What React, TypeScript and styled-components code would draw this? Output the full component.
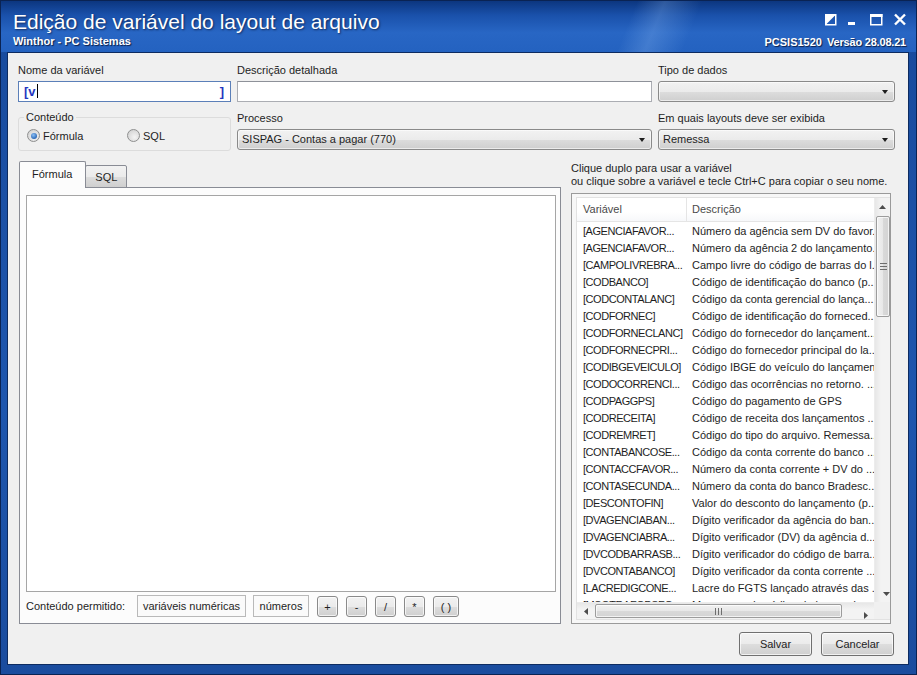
import React from 'react';
import styled, { createGlobalStyle, css } from 'styled-components';

const GlobalStyle = createGlobalStyle`
  html, body {
    margin: 0;
    padding: 0;
  }

  body {
    width: 917px;
    height: 675px;
    overflow: hidden;
    font-family: 'Liberation Sans', Arial, sans-serif;
    font-size: 11px;
    color: #1e1e1e;
  }

  * {
    box-sizing: border-box;
  }
`;

const vars: [string, string][] = [
  ['[AGENCIAFAVOR...', 'Número da agência sem DV do favor...'],
  ['[AGENCIAFAVOR...', 'Número da agência 2 do lançamento...'],
  ['[CAMPOLIVREBRA...', 'Campo livre do código de barras do l...'],
  ['[CODBANCO]', 'Código de identificação do banco (p...'],
  ['[CODCONTALANC]', 'Código da conta gerencial do lança...'],
  ['[CODFORNEC]', 'Código de identificação do forneced...'],
  ['[CODFORNECLANC]', 'Código do fornecedor do lançament...'],
  ['[CODFORNECPRI...', 'Código do fornecedor principal do la...'],
  ['[CODIBGEVEICULO]', 'Código IBGE do veículo do lançamento'],
  ['[CODOCORRENCI...', 'Código das ocorrências no retorno. ...'],
  ['[CODPAGGPS]', 'Código do pagamento de GPS'],
  ['[CODRECEITA]', 'Código de receita dos lançamentos ...'],
  ['[CODREMRET]', 'Código do tipo do arquivo. Remessa...'],
  ['[CONTABANCOSE...', 'Código da conta corrente do banco ...'],
  ['[CONTACCFAVOR...', 'Número da conta corrente + DV do ...'],
  ['[CONTASECUNDA...', 'Número da conta do banco Bradesc...'],
  ['[DESCONTOFIN]', 'Valor do desconto do lançamento (p...'],
  ['[DVAGENCIABAN...', 'Dígito verificador da agência do ban...'],
  ['[DVAGENCIABRA...', 'Dígito verificador (DV) da agência d...'],
  ['[DVCODBARRASB...', 'Dígito verificador do código de barra...'],
  ['[DVCONTABANCO]', 'Dígito verificador da conta corrente ...'],
  ['[LACREDIGCONE...', 'Lacre do FGTS lançado através das ...'],
  ['[MSGTRAFGPSFG...', 'Mensagem do código de barras de ...'],
];

const winButton = css`
  border: 1px solid #707070;
  border-radius: 3px;
  background: linear-gradient(180deg, #f2f2f2 0%, #ebebeb 50%, #dddddd 51%, #cfcfcf 100%);
  box-shadow: inset 0 0 0 1px rgba(255, 255, 255, 0.7);
  font-family: inherit;
  font-size: 11px;
  color: #1e1e1e;
  padding: 0;
`;

function Dialog() {
  return (
    <Window>
      <TitleBar>
        <TitleLeft>
          <Title>Edição de variável do layout de arquivo</Title>
          <SubTitle>Winthor - PC Sistemas</SubTitle>
        </TitleLeft>
        <TitleRight>
          <WindowControls width='84' height='13' viewBox='0 0 84 13'>
            <rect x='1.75' y='1.75' width='10' height='10' fill='none' stroke='#fff' strokeWidth='1.5' />
            <polygon points='1.75,1.75 11.75,1.75 1.75,11.75' fill='#fff' />
            <rect x='24' y='9' width='7' height='3' fill='#fff' />
            <rect x='46.75' y='1.75' width='11' height='10' fill='none' stroke='#fff' strokeWidth='1.5' />
            <rect x='46' y='1' width='12.5' height='3' fill='#fff' />
            <path d='M71 1.5 L81 11.5 M81 1.5 L71 11.5' stroke='#fff' strokeWidth='2.4' />
          </WindowControls>
          <SubTitle>
            PCSIS1520 <Version>Versão 28.08.21</Version>
          </SubTitle>
        </TitleRight>
      </TitleBar>

      <Client>
        <FormGrid>
          <Field>
            <Label>Nome da variável</Label>
            <NameInput>
              <span>
                [v<Caret />
              </span>
              <span>]</span>
            </NameInput>
          </Field>
          <Field>
            <Label>Descrição detalhada</Label>
            <TextInput />
          </Field>
          <Field>
            <Label>Tipo de dados</Label>
            <Combo />
          </Field>

          <GroupBox>
            <legend>Conteúdo</legend>
            <RadioRow>
              <RadioItem $width={100}>
                <Radio $checked />
                Fórmula
              </RadioItem>
              <RadioItem>
                <Radio />
                SQL
              </RadioItem>
            </RadioRow>
          </GroupBox>
          <Field $offset>
            <Label>Processo</Label>
            <Combo>SISPAG - Contas a pagar (770)</Combo>
          </Field>
          <Field $offset>
            <Label>Em quais layouts deve ser exibida</Label>
            <Combo>Remessa</Combo>
          </Field>
        </FormGrid>

        <MainGrid>
          <TabsColumn>
            <TabStrip>
              <Tab $active>Fórmula</Tab>
              <Tab>SQL</Tab>
            </TabStrip>
            <TabPanel>
              <Memo />
              <AllowedRow>
                <AllowedLabel>Conteúdo permitido:</AllowedLabel>
                <AllowedBox $width={109}>variáveis numéricas</AllowedBox>
                <AllowedBox $width={56}>números</AllowedBox>
                <OpButton>+</OpButton>
                <OpButton>-</OpButton>
                <OpButton>/</OpButton>
                <OpButton>*</OpButton>
                <OpButton $wide>( )</OpButton>
              </AllowedRow>
            </TabPanel>
          </TabsColumn>

          <VarsColumn>
            <Hint>
              Clique duplo para usar a variável
              <br />
              ou clique sobre a variável e tecle Ctrl+C para copiar o seu nome.
            </Hint>
            <ListGroup>
              <ListView>
                <ListBody>
                  <HeaderRow>
                    <HeaderCell $first>Variável</HeaderCell>
                    <HeaderCell>Descrição</HeaderCell>
                  </HeaderRow>
                  {vars.map(([name, desc], i) => (
                    <Row key={i}>
                      <NameCell>{name}</NameCell>
                      <DescCell>{desc}</DescCell>
                    </Row>
                  ))}
                </ListBody>
                <VScroll>
                  <ScrollArrow>
                    <svg width='7' height='4' viewBox='0 0 7 4'>
                      <path d='M0 4 L3.5 0 L7 4 Z' fill='#4d4d4d' />
                    </svg>
                  </ScrollArrow>
                  <VThumb>
                    <Grip $vertical />
                  </VThumb>
                  <ScrollArrow $end>
                    <svg width='7' height='4' viewBox='0 0 7 4'>
                      <path d='M0 0 L3.5 4 L7 0 Z' fill='#4d4d4d' />
                    </svg>
                  </ScrollArrow>
                </VScroll>
                <HScroll>
                  <ScrollArrow>
                    <svg width='4' height='7' viewBox='0 0 4 7'>
                      <path d='M4 0 L0 3.5 L4 7 Z' fill='#4d4d4d' />
                    </svg>
                  </ScrollArrow>
                  <HThumb>
                    <Grip />
                  </HThumb>
                  <ScrollArrow $end>
                    <svg width='4' height='7' viewBox='0 0 4 7'>
                      <path d='M0 0 L4 3.5 L0 7 Z' fill='#4d4d4d' />
                    </svg>
                  </ScrollArrow>
                </HScroll>
                <Corner />
              </ListView>
            </ListGroup>
          </VarsColumn>
        </MainGrid>

        <Footer>
          <DialogButton type='button'>Salvar</DialogButton>
          <DialogButton type='button'>Cancelar</DialogButton>
        </Footer>
      </Client>
    </Window>
  );
}

export default function App() {
  return (
    <>
      <GlobalStyle />
      <Dialog />
    </>
  );
}

const Window = styled.div`
  width: 917px;
  height: 675px;
  display: flex;
  flex-direction: column;
  padding: 0 7px 9px 6px;
  border: 1px solid #0a2353;
  background: linear-gradient(180deg, #184a9c 0%, #1e56ae 60%, #1a4c9e 100%);
`;

const TitleBar = styled.div`
  flex: none;
  height: 51px;
  margin: 0 -7px 0 -6px;
  padding: 0 10px 0 12px;
  display: flex;
  justify-content: space-between;
  background:
    linear-gradient(112deg, transparent 68%, rgba(170, 210, 255, 0.22) 71%, transparent 75%),
    linear-gradient(180deg, #0c367f 0%, #1a51ab 28%, #2866c4 62%, #2462c0 100%);
  color: #fff;
`;

const TitleLeft = styled.div`
  padding-top: 10px;
  display: flex;
  flex-direction: column;
`;

const Title = styled.div`
  font-size: 21px;
  line-height: 22px;
  text-shadow: 1px 1px 2px rgba(0, 0, 20, 0.55);
`;

const SubTitle = styled.div`
  margin-top: 2px;
  font-size: 11px;
  font-weight: bold;
  line-height: 13px;
  white-space: nowrap;
  text-shadow: 1px 1px 1px rgba(0, 0, 20, 0.7);
`;

const Version = styled.span`
  margin-left: 2px;
  letter-spacing: -0.2px;
`;

const TitleRight = styled.div`
  padding-top: 12px;
  display: flex;
  flex-direction: column;
  align-items: flex-end;
`;

const WindowControls = styled.svg`
  display: block;
  margin-right: -2px;
  margin-bottom: 8px;
`;

const Client = styled.div`
  flex: 1;
  display: flex;
  flex-direction: column;
  padding: 10px 13px 7px 10px;
  border: 1px solid #0d2b60;
  background: #f0f0f0;
  min-height: 0;
`;

const FormGrid = styled.div`
  display: grid;
  grid-template-columns: 213px 415px 237px;
  column-gap: 6px;
  row-gap: 8px;
`;

const Field = styled.div<{ $offset?: boolean }>`
  display: flex;
  flex-direction: column;
  padding-top: ${({ $offset }) => ($offset ? '1px' : '0')};
`;

const Label = styled.div`
  line-height: 14px;
  margin-bottom: 4px;
  white-space: nowrap;
`;

const TextInput = styled.div`
  height: 21px;
  border: 1px solid #abadb3;
  border-top-color: #8e9199;
  background: #fff;
`;

const NameInput = styled(TextInput)`
  display: flex;
  align-items: center;
  justify-content: space-between;
  padding: 0 6px 0 5px;
  color: #2436c0;
  font-size: 13px;
  font-weight: bold;
  border-color: #5b7fb8;
`;

const Caret = styled.span`
  display: inline-block;
  width: 1px;
  height: 14px;
  margin-left: 1px;
  vertical-align: -2px;
  background: #000;
`;

const Combo = styled.div`
  position: relative;
  height: 21px;
  padding: 0 20px 0 4px;
  line-height: 19px;
  white-space: nowrap;
  border: 1px solid #8a8a8a;
  border-radius: 3px;
  background: linear-gradient(180deg, #f2f2f2 0%, #ebebeb 50%, #dddddd 51%, #cfcfcf 100%);
  box-shadow: inset 0 0 0 1px rgba(255, 255, 255, 0.6);

  &::after {
    content: '';
    position: absolute;
    right: 6px;
    top: 8px;
    border-left: 3.5px solid transparent;
    border-right: 3.5px solid transparent;
    border-top: 4px solid #1e1e1e;
  }
`;

const GroupBox = styled.fieldset`
  margin: 0;
  padding: 0 8px 0 9px;
  height: 41px;
  border: 1px solid #dcdcdc;
  border-radius: 3px;

  legend {
    padding: 0 2px;
    margin-left: -4px;
    line-height: 14px;
  }
`;

const RadioRow = styled.div`
  display: flex;
  align-items: center;
  margin-top: 5px;
  margin-left: -1px;
`;

const RadioItem = styled.label<{ $width?: number }>`
  display: flex;
  align-items: center;
  gap: 3px;
  width: ${({ $width }) => ($width ? `${$width}px` : 'auto')};
`;

const Radio = styled.span<{ $checked?: boolean }>`
  position: relative;
  width: 13px;
  height: 13px;
  border: 1px solid #8e8f8f;
  border-radius: 50%;
  background: radial-gradient(circle at 60% 65%, #f4f4f4 0%, #dcdcdc 60%, #cbcbcb 100%);

  &::after {
    content: '';
    display: ${({ $checked }) => ($checked ? 'block' : 'none')};
    position: absolute;
    left: 2.5px;
    top: 2.5px;
    width: 6px;
    height: 6px;
    border-radius: 50%;
    background: radial-gradient(circle at 40% 35%, #8cc0f5 0%, #2c69b8 70%, #1b4f96 100%);
  }
`;

const MainGrid = styled.div`
  flex: 1;
  display: grid;
  grid-template-columns: 542px 320px;
  column-gap: 10px;
  margin: 10px 0 0 1px;
  min-height: 0;
`;

const TabsColumn = styled.div`
  display: flex;
  flex-direction: column;
  min-height: 0;
`;

const TabStrip = styled.div`
  display: flex;
  align-items: flex-end;
  height: 27px;
  margin-bottom: -1px;
  position: relative;
  z-index: 1;
`;

const Tab = styled.div<{ $active?: boolean }>`
  height: ${({ $active }) => ($active ? '27px' : '23px')};
  padding: ${({ $active }) => ($active ? '6px 13px 0 12px' : '5px 9px 0 9px')};
  border: 1px solid #898c95;
  border-bottom: ${({ $active }) => ($active ? 'none' : '1px solid #898c95')};
  margin-left: ${({ $active }) => ($active ? '0' : '-1px')};
  background: ${({ $active }) =>
    $active ? '#fcfcfc' : 'linear-gradient(180deg, #f2f2f2 0%, #ebebeb 50%, #dddddd 51%, #cfcfcf 100%)'};
  border-radius: 2px 2px 0 0;
`;

const TabPanel = styled.div`
  flex: 1;
  display: flex;
  flex-direction: column;
  padding: 7px 4px 6px 6px;
  border: 1px solid #898c95;
  background: #fcfcfc;
  min-height: 0;
`;

const Memo = styled.div`
  flex: 1;
  border: 1px solid #a5a5a5;
  background: #fff;
`;

const AllowedRow = styled.div`
  display: flex;
  align-items: center;
  gap: 7px;
  height: 22px;
  margin-top: 3px;
`;

const AllowedLabel = styled.div`
  width: 104px;
  white-space: nowrap;
`;

const AllowedBox = styled.div<{ $width: number }>`
  width: ${({ $width }) => $width}px;
  height: 22px;
  line-height: 20px;
  text-align: center;
  border: 1px solid #b9b9b9;
  background: #fafafa;
  white-space: nowrap;
`;

const OpButton = styled.button<{ $wide?: boolean }>`
  ${winButton}
  width: ${({ $wide }) => ($wide ? '26px' : '21px')};
  height: 21px;
  margin-left: 1px;
  margin-top: 1px;
  border-color: #8a8a8a;
`;

const VarsColumn = styled.div`
  display: flex;
  flex-direction: column;
  min-height: 0;
`;

const Hint = styled.div`
  height: 32px;
  padding-top: 1px;
  line-height: 13px;
  white-space: nowrap;
`;

const ListGroup = styled.div`
  flex: 1;
  display: flex;
  padding: 3px 0 3px 4px;
  border: 1px solid #9a9a9a;
  background: #f7f7f7;
  min-height: 0;
`;

const ListView = styled.div`
  flex: 1;
  display: grid;
  grid-template-columns: 1fr 16px;
  grid-template-rows: 1fr 17px;
  border: 1px solid #e2e2e2;
  border-right: none;
  background: #fff;
  min-height: 0;
`;

const ListBody = styled.div`
  overflow: hidden;
  min-height: 0;
`;

const HeaderRow = styled.div`
  display: grid;
  grid-template-columns: 110px 1fr;
  height: 24px;
  margin-bottom: 1px;
  border-bottom: 1px solid #e5e5e5;
  background: linear-gradient(180deg, #ffffff 0%, #ffffff 60%, #f7f8fa 100%);
`;

const HeaderCell = styled.div<{ $first?: boolean }>`
  padding-left: ${({ $first }) => ($first ? '6px' : '5px')};
  line-height: 23px;
  color: #4a4a4a;
  border-right: ${({ $first }) => ($first ? '1px solid #e5e5e5' : 'none')};
`;

const Row = styled.div`
  display: grid;
  grid-template-columns: 110px 1fr;
  height: 17px;
  line-height: 17px;
`;

const cellText = css`
  white-space: nowrap;
  overflow: hidden;
  text-overflow: clip;
`;

const NameCell = styled.div`
  ${cellText}
  padding-left: 6px;
  letter-spacing: -0.45px;
`;

const DescCell = styled.div`
  ${cellText}
  padding-left: 5px;
`;

const VScroll = styled.div`
  grid-row: 1;
  grid-column: 2;
  display: flex;
  flex-direction: column;
  background: linear-gradient(90deg, #e7e7e7 0%, #f3f3f3 40%, #f3f3f3 100%);
  border-left: 1px solid #ececec;
`;

const HScroll = styled.div`
  grid-row: 2;
  grid-column: 1;
  display: flex;
  align-items: stretch;
  background: linear-gradient(180deg, #e7e7e7 0%, #f3f3f3 40%, #f3f3f3 100%);
  border-top: 1px solid #ececec;
`;

const Corner = styled.div`
  grid-row: 2;
  grid-column: 2;
  background: #f0f0f0;
`;

const ScrollArrow = styled.div<{ $end?: boolean }>`
  flex: 0 0 17px;
  display: flex;
  align-items: center;
  justify-content: center;
  margin-left: ${({ $end }) => ($end ? 'auto' : '0')};
  margin-top: ${({ $end }) => ($end ? 'auto' : '0')};
`;

const thumb = css`
  display: flex;
  align-items: center;
  justify-content: center;
  border: 1px solid #9c9c9c;
  border-radius: 2px;
  background: linear-gradient(90deg, #f1f1f1 0%, #e8e8e8 50%, #d9d9d9 51%, #d4d4d4 100%);
  box-shadow: inset 0 0 0 1px rgba(255, 255, 255, 0.7);
`;

const VThumb = styled.div`
  ${thumb}
  height: 101px;
  margin: 1px 0 0 1px;
`;

const HThumb = styled.div`
  ${thumb}
  width: 247px;
  margin: 1px 0 1px 1px;
  background: linear-gradient(180deg, #f1f1f1 0%, #e8e8e8 50%, #d9d9d9 51%, #d4d4d4 100%);
`;

const Grip = styled.div<{ $vertical?: boolean }>`
  width: 7px;
  height: 7px;
  background: ${({ $vertical }) =>
    $vertical
      ? 'repeating-linear-gradient(180deg, #6e6e6e 0 1px, transparent 1px 3px)'
      : 'repeating-linear-gradient(90deg, #6e6e6e 0 1px, transparent 1px 3px)'};
`;

const Footer = styled.div`
  flex: none;
  display: flex;
  justify-content: flex-end;
  gap: 9px;
  padding: 8px 1px 0 0;
  margin-bottom: 1px;
`;

const DialogButton = styled.button`
  ${winButton}
  width: 73px;
  height: 24px;
`;
